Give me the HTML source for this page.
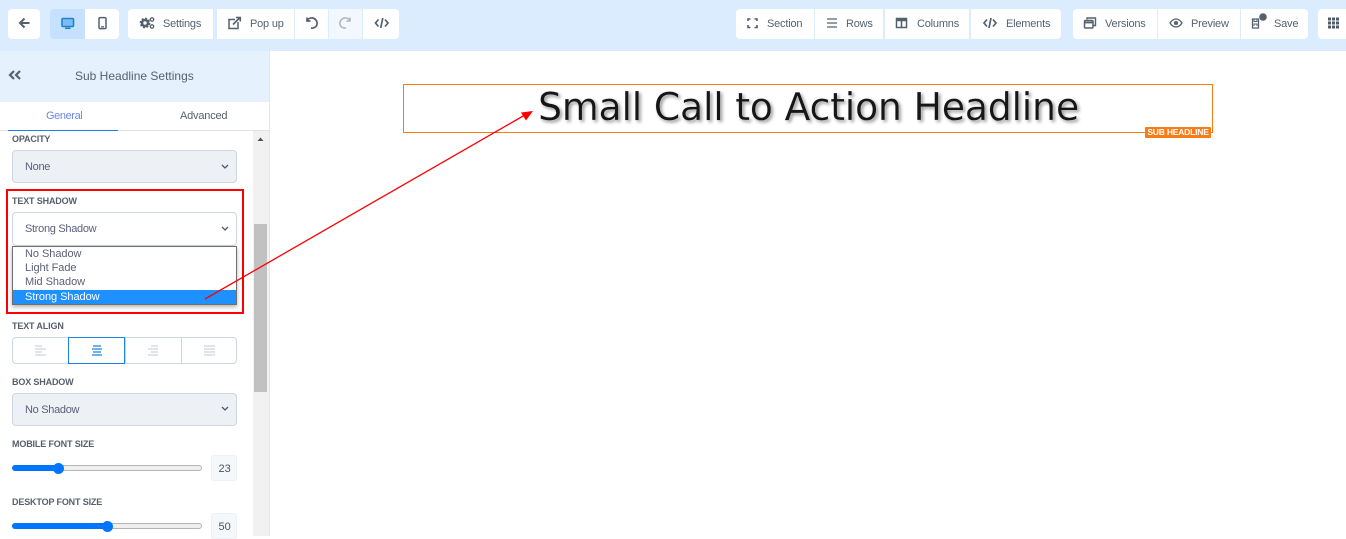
<!DOCTYPE html>
<html><head><meta charset="utf-8">
<style>
html,body{margin:0;padding:0;width:1346px;height:536px;overflow:hidden;background:#fff;font-family:"Liberation Sans",sans-serif;}
.a{position:absolute;}
.b{position:absolute;top:9px;height:30px;background:#fff;}
.t{position:absolute;white-space:nowrap;font-size:11px;line-height:14px;color:#56626e;letter-spacing:-.2px;}
.l{position:absolute;left:12px;white-space:nowrap;font-size:9px;font-weight:bold;line-height:12px;color:#565f6b;letter-spacing:-.15px;}
.s{position:absolute;left:12px;width:225px;box-sizing:border-box;border:1px solid #ccd6e0;border-radius:4px;background:#edf1f6;}
.o{position:absolute;left:25px;white-space:nowrap;font-size:11px;line-height:14px;color:#5c5f78;letter-spacing:-.05px;}
.n{letter-spacing:-.3px;}
svg{position:absolute;overflow:visible;}
</style></head><body>
<div class="a" style="left:0;top:0;width:1346px;height:51px;background:#dbecfe;"></div>

<!-- left toolbar -->
<div class="b" style="left:8px;width:32px;border-radius:4px;"></div>
<div class="b" style="left:50px;width:35px;background:#c5e1fd;border-radius:4px 0 0 4px;"></div>
<div class="b" style="left:85px;width:34px;border-radius:0 4px 4px 0;"></div>
<div class="b" style="left:128px;width:85px;border-radius:4px 0 0 4px;"></div>
<div class="b" style="left:217px;width:77px;"></div>
<div class="b" style="left:295px;width:33px;"></div>
<div class="b" style="left:329px;width:33px;background:#f2f8fe;"></div>
<div class="b" style="left:363px;width:36px;border-radius:0 4px 4px 0;"></div>

<svg style="left:0;top:0" width="400" height="51" fill="none" stroke="#55616d" stroke-width="1.6">
<path d="M29.5 23H21M24.500 18.500L20 23L24.500 27.500" stroke-width="2"/>
<rect x="62" y="18.500" width="11.500" height="8" rx="1" stroke="#1c84d8" stroke-width="1.600" fill="#7fbdf0"/><path d="M65 28.300H70.500" stroke="#1c84d8" stroke-width="1.500"/>
<rect x="99" y="17.600" width="7" height="11" rx="1.200" stroke-width="1.500"/><path d="M101 26.800H104" stroke-width="1.200"/>
<circle cx="145" cy="23" r="3" stroke-width="2.600"/><circle cx="145" cy="23" r="4.600" stroke-width="1.500" stroke-dasharray="2 1.600"/>
<circle cx="152" cy="19.500" r="1.700" stroke-width="1.300"/><circle cx="152" cy="26.500" r="1.700" stroke-width="1.300"/>
<path d="M238 22V28.500H229V19.500H235" stroke-width="1.500"/><path d="M233 24.500L239.500 18M236 17.500H240.300V21.500" stroke-width="1.600"/>
<path d="M307 20.500C309 17.500 313 17 315.500 19.500C318 22 317.500 26 314.500 27.500C313.500 28 312.500 28.300 311 28" stroke-width="1.700"/><path d="M307 17.500V21H310.500" stroke-width="1.700"/>
<path d="M350 20.500C348 17.500 344 17 341.500 19.500C339 22 339.500 26 342.500 27.500C343.500 28 344.500 28.300 346 28" stroke="#aab4bd" stroke-width="1.500"/><path d="M350 17.500V21H346.500" stroke="#aab4bd" stroke-width="1.500"/>
<path d="M378.500 19.500L375.500 23L378.500 26.500M385 19.500L388 23L385 26.500M382.800 18L380.700 28" stroke-width="1.700"/>
</svg>
<div class="t" style="left:163px;top:17px;">Settings</div>
<div class="t" style="left:250px;top:17px;">Pop up</div>

<!-- right toolbar -->
<div class="b" style="left:736px;width:78px;border-radius:4px 0 0 4px;"></div>
<div class="b" style="left:815px;width:68px;"></div>
<div class="b" style="left:885px;width:84px;"></div>
<div class="b" style="left:971px;width:90px;border-radius:0 4px 4px 0;"></div>
<div class="b" style="left:1073px;width:84px;border-radius:4px 0 0 4px;"></div>
<div class="b" style="left:1158px;width:82px;"></div>
<div class="b" style="left:1241px;width:67px;border-radius:0 4px 4px 0;"></div>
<div class="b" style="left:1318px;width:28px;border-radius:4px 0 0 4px;"></div>

<svg style="left:0;top:0" width="1346" height="51" fill="none" stroke="#55616d" stroke-width="1.600">
<path d="M748 21V19H750.500M754.500 19H757V21M757 25V27.500H754.500M750.500 27.500H748V25"/>
<path d="M827 19H837M827 23H837M827 27H837" stroke-width="1.300"/>
<rect x="896.500" y="18.500" width="10" height="9" stroke-width="1.500"/><path d="M896.500 20H906.500" stroke-width="2.500"/><path d="M901.500 20.500V27.500" stroke-width="1.600"/>
<path d="M987 19.500L984 23L987 26.500M993 19.500L996 23L993 26.500M991 18L989 28" stroke-width="1.700"/>
<rect x="1084.500" y="20.500" width="8.500" height="7.500" rx="1" stroke-width="1.500"/><path d="M1087 19.500V18H1095.500V25.500H1093.500" stroke-width="1.400"/><path d="M1085 22.500H1093" stroke-width="1.800"/>
<path d="M1170 23C1172 20 1174 19 1176 19C1178 19 1180 20 1182 23C1180 26 1178 27 1176 27C1174 27 1172 26 1170 23Z" stroke-width="1.300"/><circle cx="1176" cy="23" r="2" fill="#55616d" stroke="none"/>
<path d="M1252.500 19H1258.500V28H1252.500Z" stroke-width="1.300"/><path d="M1254 19V21.500H1257V19M1254 26V24H1257V26" stroke-width="1"/>
<circle cx="1263" cy="17" r="3.800" fill="#55616d" stroke="none"/>
<path d="M1328 19H1339.500M1328 23H1339.500M1328 27H1339.500" stroke="#4f5b66" stroke-width="3" stroke-dasharray="3 1"/>
</svg>
<div class="t" style="left:767px;top:17px;">Section</div>
<div class="t" style="left:846px;top:17px;">Rows</div>
<div class="t" style="left:917px;top:17px;">Columns</div>
<div class="t" style="left:1006px;top:17px;">Elements</div>
<div class="t" style="left:1105px;top:17px;">Versions</div>
<div class="t" style="left:1191px;top:17px;">Preview</div>
<div class="t" style="left:1274px;top:17px;">Save</div>

<!-- sidebar -->
<div class="a" style="left:0;top:51px;width:269px;height:51px;background:#e5f2fe;"></div>
<div class="a" style="left:269px;top:51px;width:1px;height:485px;background:#e2e6ea;"></div>
<svg style="left:0;top:0" width="30" height="90" fill="none" stroke="#55616d" stroke-width="2.200"><path d="M14 71L10 75L14 79M20 71L16 75L20 79"/></svg>
<div class="t" style="left:75px;top:69px;font-size:12px;letter-spacing:0;">Sub Headline Settings</div>
<div class="t" style="left:46px;top:108.500px;color:#6f86e8;letter-spacing:-.4px;">General</div>
<div class="t" style="left:180px;top:108.500px;">Advanced</div>
<div class="a" style="left:0;top:130px;width:269px;height:1px;background:#dfe3e7;"></div>
<div class="a" style="left:8px;top:130px;width:110px;height:1px;background:#1a82e2;"></div>

<div class="a" style="left:253px;top:131px;width:16px;height:405px;background:#f1f1f1;"></div>
<div class="a" style="left:254px;top:224px;width:13px;height:168px;background:#c1c1c1;"></div>
<svg style="left:0;top:0" width="269" height="150"><path d="M257.500 141L260.500 137.500L263.500 141Z" fill="#505050"/></svg>

<div class="l" style="top:133px;">OPACITY</div>
<div class="s" style="top:150px;height:33px;"></div>
<div class="o n" style="top:160px;">None</div>

<div class="a" style="left:6px;top:189px;width:238px;height:125px;box-sizing:border-box;border:2px solid #f00;"></div>
<div class="l" style="top:195px;">TEXT SHADOW</div>
<div class="s" style="top:212px;height:34px;background:#fff;"></div>
<div class="o n" style="top:222px;">Strong Shadow</div>
<div class="a" style="left:12px;top:246px;width:225px;height:59px;box-sizing:border-box;border:1px solid #6f6f6f;background:#fff;box-shadow:0 2px 4px rgba(0,0,0,.3);"></div>
<div class="a" style="left:13px;top:290px;width:223px;height:14px;background:#1e90ff;"></div>
<div class="o" style="top:247px;">No Shadow</div>
<div class="o" style="top:261px;">Light Fade</div>
<div class="o" style="top:275px;">Mid Shadow</div>
<div class="o" style="top:290px;color:#fff;">Strong Shadow</div>

<div class="l" style="top:320px;">TEXT ALIGN</div>
<div class="a" style="left:12px;top:337px;width:225px;height:27px;box-sizing:border-box;border:1px solid #ccd6e0;border-radius:4px;background:#fff;"></div>
<div class="a" style="left:181px;top:337px;width:1px;height:27px;background:#ccd6e0;"></div>
<div class="a" style="left:125px;top:337px;width:1px;height:27px;background:#ccd6e0;"></div>
<div class="a" style="left:68px;top:337px;width:57px;height:27px;box-sizing:border-box;border:1px solid #1a82e2;"></div>
<svg style="left:0;top:0" width="269" height="370" fill="none" stroke-width="1.300">
<path d="M35 346H42M35 349H46M35 352H42M35 355H46" stroke="#ccd5de"/>
<path d="M93 346H101M92 349H102M93 352H101M92 355H102" stroke="#1a82e2"/>
<path d="M151 346H158M148 349H158M151 352H158M148 355H158" stroke="#ccd5de"/>
<path d="M204 346H215M204 349H215M204 352H215M204 355H215" stroke="#ccd5de"/>
</svg>

<div class="l" style="top:376px;">BOX SHADOW</div>
<div class="s" style="top:393px;height:33px;"></div>
<div class="o n" style="top:403px;">No Shadow</div>

<svg style="left:0;top:0" width="269" height="420" fill="none" stroke="#4d5a66" stroke-width="1.300">
<path d="M222 165L225 168L228 165M222 227L225 230L228 227M222 407L225 410L228 407"/>
</svg>

<div class="l" style="top:438px;">MOBILE FONT SIZE</div>
<div class="a" style="left:12px;top:465px;width:190px;height:6px;box-sizing:border-box;border:1px solid #b5b5b5;border-radius:3px;background:#efefef;"></div>
<div class="a" style="left:12px;top:465px;width:46px;height:6px;border-radius:3px;background:#0075ff;"></div>
<div class="a" style="left:53px;top:462.500px;width:11px;height:11px;border-radius:50%;background:#0075ff;"></div>
<div class="a" style="left:211px;top:455px;width:26px;height:26px;box-sizing:border-box;border:1px solid #edf1f5;border-radius:3px;background:#f5f8fa;"></div>
<div class="t" style="left:218.500px;top:461.500px;color:#4a5560;font-size:11px;letter-spacing:0;">23</div>

<div class="l" style="top:496px;">DESKTOP FONT SIZE</div>
<div class="a" style="left:12px;top:523px;width:190px;height:6px;box-sizing:border-box;border:1px solid #b5b5b5;border-radius:3px;background:#efefef;"></div>
<div class="a" style="left:12px;top:523px;width:95px;height:6px;border-radius:3px;background:#0075ff;"></div>
<div class="a" style="left:102px;top:520.500px;width:11px;height:11px;border-radius:50%;background:#0075ff;"></div>
<div class="a" style="left:211px;top:513px;width:26px;height:26px;box-sizing:border-box;border:1px solid #edf1f5;border-radius:3px;background:#f5f8fa;"></div>
<div class="t" style="left:218.500px;top:519.500px;color:#4a5560;font-size:11px;letter-spacing:0;">50</div>

<!-- canvas -->
<div class="a" style="left:403px;top:84px;width:810px;height:49px;box-sizing:border-box;border:1px solid #f97b16;"></div>
<div class="a" style="left:538px;top:84px;white-space:nowrap;font-family:'DejaVu Sans',sans-serif;font-size:38px;line-height:47px;color:#161616;letter-spacing:-.31px;-webkit-text-stroke:.25px rgba(255,255,255,.7);text-shadow:2px 2px 3px rgba(0,0,0,.4);">Small Call to Action Headline</div>
<div class="a" style="left:1145px;top:127px;width:66px;height:11px;background:#f97b16;border-radius:1px;color:#fff;font-size:8.500px;font-weight:bold;line-height:11px;letter-spacing:-.2px;text-align:center;white-space:nowrap;overflow:hidden;">SUB HEADLINE</div>

<svg style="left:0;top:0" width="1346" height="536" fill="none">
<path d="M205 299L524 115.500" stroke="#f00" stroke-width="1.300"/>
<path d="M533 111L521 112.500L526 120.500Z" fill="#f00"/>
</svg>
</body></html>
